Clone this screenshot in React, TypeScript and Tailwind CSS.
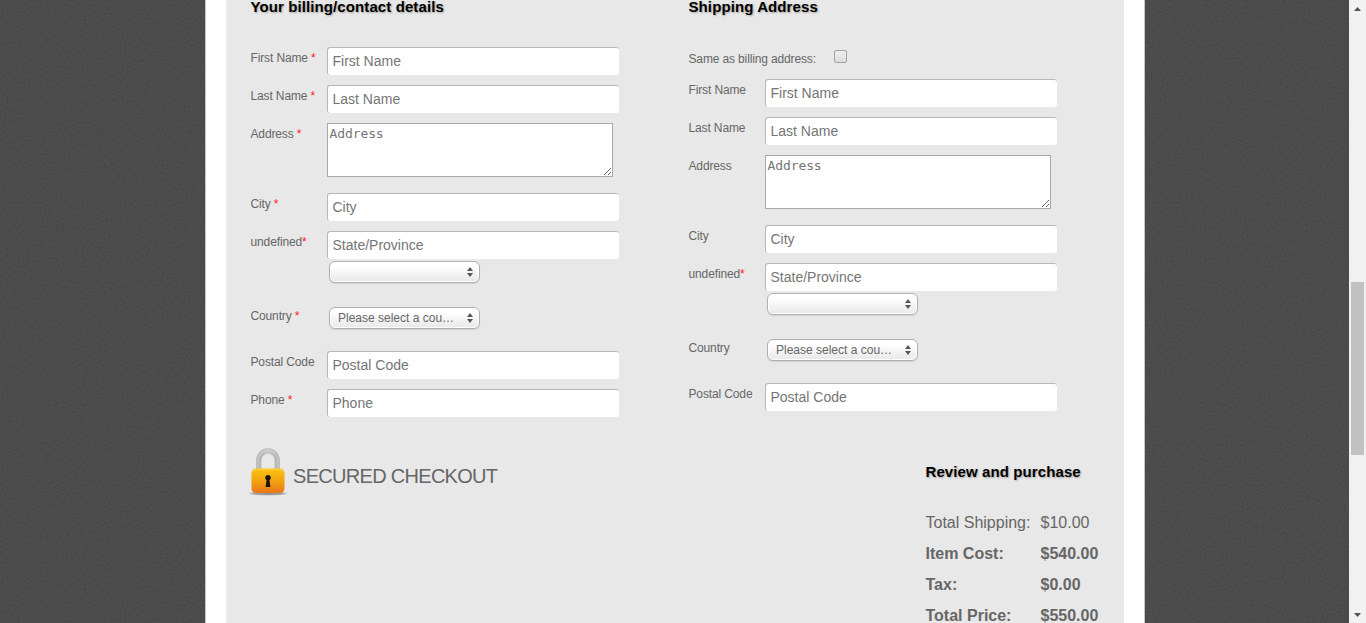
import type { ReactNode } from "react";

function Row({ label, star, height, children }: { label: string; star?: string; height: string; children: ReactNode }) {
  return (
    <div className={`flex items-start ${height}`}>
      <label className="w-[76.500px] shrink-0 whitespace-pre pt-[3px] text-[12px] leading-4 tracking-[-0.13px] text-[#666]">
        {label}
        {star && <span className="text-[#ff1a2a]">{star}</span>}
      </label>
      <div className="flex flex-col items-start">{children}</div>
    </div>
  );
}

function Field({ name }: { name: string }) {
  return (
    <input
      placeholder={name}
      className="block h-7 w-[292px] rounded-[3px] border-t border-l border-[#b7b7b7] bg-white pb-px pl-[4.500px] text-[14px] text-[#666] outline-none placeholder:text-[#757575]"
    />
  );
}

function AddressArea() {
  return (
    <textarea
      placeholder="Address"
      className="block h-[54px] w-[286px] resize border border-[#a9a9a9] bg-white px-[1.500px] py-[2px] font-['DejaVu_Sans_Mono',monospace] text-[13px] leading-[16px] tracking-[-0.1px] outline-none placeholder:text-[#757575]"
    />
  );
}

function Select({ text, className }: { text?: string; className: string }) {
  return (
    <button
      type="button"
      className={`ml-[2px] flex h-[22px] w-[151px] items-center justify-between rounded-[6px] border border-[#b0b0b0] bg-linear-to-b from-white from-20% to-[#e8e8e8] pr-[6px] pl-2 text-[12px] text-[#666] shadow-[inset_0_0_0_1px_#fff,0_1px_1px_rgba(0,0,0,0.1)] ${className}`}
    >
      <span className="whitespace-nowrap leading-4">{text}</span>
      <svg width="6" height="10" viewBox="0 0 6 10" fill="#555">
        <path d="M3 0 6 4H0ZM0 6h6L3 10Z" />
      </svg>
    </button>
  );
}

function Heading({ children }: { children: ReactNode }) {
  return (
    <h3 className="text-[15px] leading-[15px] font-bold tracking-[0.1px] text-black [text-shadow:1px_1px_2px_rgba(0,0,0,0.3)]">{children}</h3>
  );
}

function PadLock() {
  return (
    <svg width="42" height="50" viewBox="0 0 42 50" className="shrink-0">
      <defs>
        <linearGradient id="body" x2="0" y2="1">
          <stop stopColor="#fac413" />
          <stop offset=".5" stopColor="#f2a40f" />
          <stop offset="1" stopColor="#e8761c" />
        </linearGradient>
        <linearGradient id="shackle">
          <stop stopColor="#b0b0b0" />
          <stop offset=".5" stopColor="#cacaca" />
          <stop offset="1" stopColor="#b0b0b0" />
        </linearGradient>
        <radialGradient id="shade">
          <stop stopColor="#666" stopOpacity=".7" />
          <stop offset=".7" stopColor="#777" stopOpacity=".6" />
          <stop offset="1" stopColor="#999" stopOpacity="0" />
        </radialGradient>
      </defs>
      <ellipse cx="21" cy="46.5" rx="21" ry="2.3" fill="url(#shade)" />
      <path d="M9.2 25V13.5a11.8 12.5 0 0 1 23.6 0V25H27.500V14a6.500 7.300 0 0 0-13 0V25Z" fill="url(#shackle)" />
      <path d="M11 23V13.5a10 10.7 0 0 1 20 0V23" fill="none" stroke="#d6d6d6" strokeWidth=".8" />
      <rect x="4.5" y="21.500" width="33" height="24.500" rx="4.5" fill="url(#body)" />
      <path d="M6 25q.5-2.7 3.5-2.7h23q3 0 3.500 2.700" fill="none" stroke="#fbd65a" strokeWidth=".8" />
      <path d="M21 28a2.800 2.800 0 0 1 1.500 5.200L23.400 40H18.600L19.500 33.200A2.800 2.800 0 0 1 21 28Z" fill="#1c1306" />
    </svg>
  );
}

const totals = [
  { name: "Total Shipping:", value: "$10.00", weight: "font-normal" },
  { name: "Item Cost:", value: "$540.00", weight: "font-bold" },
  { name: "Tax:", value: "$0.00", weight: "font-bold" },
  { name: "Total Price:", value: "$550.00", weight: "font-bold" },
];

export default function App() {
  return (
    <div className="relative isolate flex h-[623px] w-full overflow-hidden bg-[#424242] font-['Liberation_Sans',Arial,sans-serif]">
      <svg className="absolute inset-0 -z-10 h-full w-full opacity-8">
        <filter id="grain">
          <feTurbulence type="fractalNoise" baseFrequency="0.45" numOctaves="2" />
          <feColorMatrix values="1 0 0 0 0 1 0 0 0 0 1 0 0 0 0 0 0 0 0 1" />
        </filter>
        <rect width="100%" height="100%" fill="#4b4b4b" filter="url(#grain)" />
      </svg>

      <main className="ml-[205px] h-full w-[940px] shrink-0 border-x border-[#c4c4c4] bg-white px-5">
        <div className="h-full bg-[#e8e8e8] pl-[24.500px]">
          <div className="flex h-[440px]">
            <section className="w-[438px] shrink-0">
              <div className="-mt-px h-12">
                <Heading>Your billing/contact details</Heading>
              </div>
              <Row label="First Name " star="*" height="h-[38px]"><Field name="First Name" /></Row>
              <Row label="Last Name " star="*" height="h-[38px]"><Field name="Last Name" /></Row>
              <Row label="Address " star="*" height="h-[70px]"><AddressArea /></Row>
              <Row label="City " star="*" height="h-[38px]"><Field name="City" /></Row>
              <Row label="undefined" star="*" height="h-[74px]">
                <Field name="State/Province" />
                <Select className="mt-[2px]" />
              </Row>
              <Row label="Country " star="*" height="h-[46px]"><Select className="mt-[2px]" text="Please select a cou…" /></Row>
              <Row label="Postal Code" height="h-[38px]"><Field name="Postal Code" /></Row>
              <Row label="Phone " star="*" height="h-[38px]"><Field name="Phone" /></Row>
            </section>

            <section className="w-[400px] shrink-0">
              <div className="-mt-px h-12">
                <Heading>Shipping Address</Heading>
              </div>
              <div className="flex h-8 items-start text-[12px] leading-4 tracking-[-0.14px] text-[#666]">
                <span className="w-[145.500px] pt-1">Same as billing address:</span>
                <span className="mt-[3px] h-[13px] w-[13px] rounded-[2px] border border-[#a2a2a2] bg-linear-to-b from-[#eee] to-[#dcdcdc]" />
              </div>
              <Row label="First Name" height="h-[38px]"><Field name="First Name" /></Row>
              <Row label="Last Name" height="h-[38px]"><Field name="Last Name" /></Row>
              <Row label="Address" height="h-[70px]"><AddressArea /></Row>
              <Row label="City" height="h-[38px]"><Field name="City" /></Row>
              <Row label="undefined" star="*" height="h-[74px]">
                <Field name="State/Province" />
                <Select className="mt-[2px]" />
              </Row>
              <Row label="Country" height="h-[46px]"><Select className="mt-[2px]" text="Please select a cou…" /></Row>
              <Row label="Postal Code" height="h-[38px]"><Field name="Postal Code" /></Row>
            </section>
          </div>

          <div className="flex items-start">
            <div className="-ml-[3.500px] flex w-[678.500px] shrink-0 items-start pt-[7px]">
              <PadLock />
              <span className="ml-[4px] pt-[15px] text-[20px] leading-7 tracking-[-0.7px] text-[#666]">SECURED CHECKOUT</span>
            </div>
            <section className="pt-6">
              <Heading>Review and purchase</Heading>
              <dl className="mt-7">
                {totals.map((t) => (
                  <div key={t.name} className={`flex h-[31px] text-[16px] leading-[31px] text-[#666] ${t.weight}`}>
                    <dt className="w-[115px]">{t.name}</dt>
                    <dd>{t.value}</dd>
                  </div>
                ))}
              </dl>
            </section>
          </div>
        </div>
      </main>

      <aside className="ml-auto flex h-full w-[17px] shrink-0 flex-col items-center bg-[#f1f1f1]">
        <svg width="17" height="17" fill="#505050"><path d="M5 11h7L8.500 7Z" /></svg>
        <div className="mt-[265px] h-[173px] w-[13px] bg-[#c1c1c1]" />
        <svg width="17" height="17" className="mt-auto" fill="#505050"><path d="M5 7h7L8.500 11Z" /></svg>
      </aside>
    </div>
  );
}
